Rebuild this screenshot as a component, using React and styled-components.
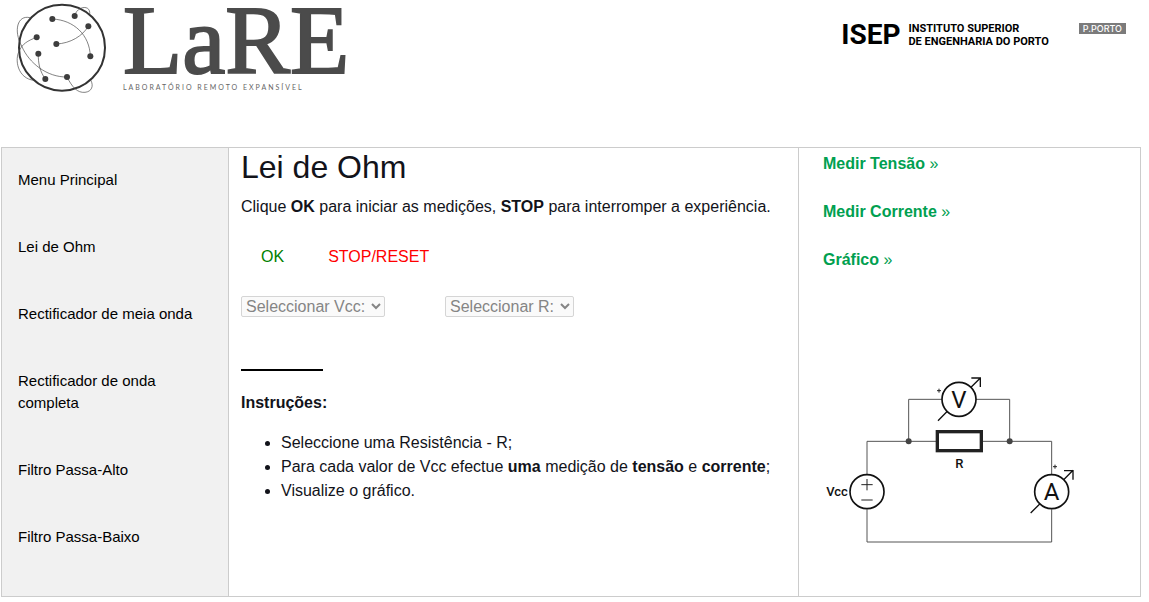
import React from "react";
import styled, { createGlobalStyle } from "styled-components";

const GlobalStyle = createGlobalStyle`
  *, *::before, *::after { box-sizing: border-box; }
  body {
    margin: 0;
    background: #fff;
    color: #12131a;
    font-family: "Liberation Sans", Arial, sans-serif;
    font-size: 16px;
    line-height: 24px;
  }
`;

const Header = styled.header`
  display: flex;
  align-items: flex-start;
  justify-content: space-between;
  min-height: 147px;
  padding: 0 23px 0 14px;
`;

const Brand = styled.a`
  display: flex;
  gap: 15px;
  color: #4b4b4b;
  text-decoration: none;
`;

const BrandText = styled.span`
  display: flex;
  flex-direction: column;
`;

const Wordmark = styled.span`
  font-family: "Liberation Serif", "Times New Roman", serif;
  font-size: 97px;
  line-height: 82px;
  -webkit-text-stroke: 2px currentColor;
`;

const Tagline = styled.small`
  font-family: Lato, sans-serif;
  font-size: 7px;
  font-weight: 400;
  line-height: 10px;
  letter-spacing: 2px;
  color: #666;
`;

const Partners = styled.div`
  display: flex;
  align-items: flex-start;
  gap: 30px;
  padding-top: 22px;
`;

const School = styled.div`
  display: flex;
  align-items: center;
  gap: 8px;
  color: #000;
  font-family: Roboto, sans-serif;
  font-weight: 700;
`;

const Acronym = styled.span`
  font-size: 28px;
  line-height: 26px;
`;

const SchoolName = styled.span`
  font-size: 11px;
  line-height: 13px;
`;

const PortoTag = styled.span`
  margin-top: 1px;
  padding: 0 4px;
  background: #7b7b7b;
  color: #fff;
  font-family: Inter, sans-serif;
  font-size: 9px;
  font-weight: 500;
  line-height: 11px;
`;

const Columns = styled.div`
  display: grid;
  grid-template-columns: 20% 50% 30%;
  min-height: 450px;
  margin: 0 8px 5px 1px;
  border: solid #ccc;
  border-width: 1px 0;
`;

const Sidebar = styled.nav`
  display: flex;
  flex-direction: column;
  gap: 45px;
  padding: 21px 16px;
  border: solid #ccc;
  border-width: 0 1px;
  background: #f1f1f1;
`;

const MenuLink = styled.a`
  color: #000;
  font-size: 15px;
  line-height: 22px;
  text-decoration: none;
`;

const Main = styled.main`
  padding: 0 12px;
  border-right: 1px solid #ccc;
`;

const Title = styled.h1`
  margin: 0 0 8px;
  font-size: 32px;
  font-weight: 400;
  line-height: 39px;
`;

const Paragraph = styled.p`
  margin: 0;
`;

const Actions = styled.div`
  display: flex;
  gap: 4px;
  margin-top: 20px;
`;

const ActionButton = styled.button`
  padding: 6px 20px;
  border: 0;
  background: transparent;
  color: ${({ $color }) => $color};
  font: inherit;
  cursor: pointer;
`;

const Selectors = styled.div`
  display: flex;
  gap: 60px;
  margin-top: 21px;
`;

const Select = styled.select`
  height: 21px;
  padding-right: 2px;
  border: 1px solid #d5d5d5;
  border-radius: 2px;
  background: #fafafa;
  color: #858585;
  font: inherit;
  line-height: 18px;
  opacity: 1;
`;

const Rule = styled.hr`
  width: 82px;
  height: 2px;
  margin: 52px 0 20px;
  border: 0;
  background: #000;
`;

const Steps = styled.ul`
  margin: 16px 0;
  padding-left: 40px;
`;

const Aside = styled.aside`
  display: flex;
  flex-direction: column;
  align-items: flex-start;
  gap: 24px;
  padding: 4px 24px;
  border-right: 1px solid #ccc;
`;

const MeasureLink = styled.a`
  color: #00a050;
  text-decoration: none;
`;

const Circuit = styled.svg`
  display: block;
  margin-top: 79px;
  font-family: Roboto, sans-serif;
  font-weight: 500;
`;

const MENU = [
  "Menu Principal",
  "Lei de Ohm",
  "Rectificador de meia onda",
  "Rectificador de onda completa",
  "Filtro Passa-Alto",
  "Filtro Passa-Baixo",
];

const MEASURES = ["Medir Tensão", "Medir Corrente", "Gráfico"];

const NODES = [
  [115, 57], [182, 48], [223, 79], [68, 112], [127, 132],
  [73, 161], [229, 169], [159, 231], [94, 237],
];

function Globe() {
  return (
    <svg width="94" height="96" viewBox="0 0 282 288" fill="none" aria-hidden="true">
      <circle cx="144" cy="143" r="129" stroke="#333" strokeWidth="6" />
      <g stroke="#444" strokeWidth="2">
        <path d="M115 57C180 60 227 105 229 169" />
        <path d="M223 79C205 108 170 130 127 132" />
        <path d="M182 48C188 18 231 12 227 43" />
        <path d="M68 112C40 122 25 133 17 150C0 178 11 236 60 241" />
        <path d="M48 53C10 44 -2 92 23 138C45 190 100 232 159 231" />
        <path d="M73 161C72 190 78 215 94 237" />
        <path d="M159 231C175 262 190 279 213 277C233 275 240 258 230 240" />
      </g>
      <g fill="#3d3d3d">
        {NODES.map(([x, y]) => <circle key={`${x}-${y}`} cx={x} cy={y} r="9" />)}
      </g>
    </svg>
  );
}

function CircuitDiagram() {
  return (
    <Circuit width="252" height="174" viewBox="0 0 756 522" fill="none" role="img" aria-label="Circuito da Lei de Ohm">
      <g stroke="#555" strokeWidth="3">
        <path d="M132 297V199H340M478 199H686V297M132 403V501H686V403" />
        <path d="M257 199V73H357M459 73H560V199" />
      </g>
      <g fill="#444">
        <circle cx="257" cy="199" r="9" />
        <circle cx="560" cy="199" r="9" />
      </g>
      <rect x="343" y="170" width="132" height="57" stroke="#222" strokeWidth="10" />
      <g stroke="#111" strokeWidth="5">
        <circle cx="408" cy="73" r="51" />
        <circle cx="132" cy="350" r="51" />
        <circle cx="686" cy="350" r="51" />
      </g>
      <g stroke="#111" strokeWidth="4">
        <path d="M444 37L472 9M445 9H472V36M373 109L345 137" />
        <path d="M722 314L750 286M723 287H750V314M651 386L623 414" />
      </g>
      <g stroke="#222" strokeWidth="3">
        <path d="M115 329H149M132 312V346M115 375H149" />
        <path d="M342 47H354M348 41V53M690 275H702M696 269V281" />
      </g>
      <g fill="#111" textAnchor="middle">
        <text x="408" y="99" fontSize="72" fontWeight="400">V</text>
        <text x="686" y="376" fontSize="72" fontWeight="400">A</text>
        <text x="409" y="278" fontSize="39">R</text>
        <text x="42" y="363" fontSize="39">Vcc</text>
      </g>
    </Circuit>
  );
}

export default function App() {
  return (
    <>
      <GlobalStyle />
      <Header>
        <Brand href="#inicio">
          <Globe />
          <BrandText>
            <Wordmark>LaRE</Wordmark>
            <Tagline>LABORATÓRIO REMOTO EXPANSÍVEL</Tagline>
          </BrandText>
        </Brand>
        <Partners>
          <School>
            <Acronym>ISEP</Acronym>
            <SchoolName>INSTITUTO SUPERIOR<br />DE ENGENHARIA DO PORTO</SchoolName>
          </School>
          <PortoTag>P.PORTO</PortoTag>
        </Partners>
      </Header>
      <Columns>
        <Sidebar>
          {MENU.map((item) => <MenuLink key={item} href="#menu">{item}</MenuLink>)}
        </Sidebar>
        <Main>
          <Title>Lei de Ohm</Title>
          <Paragraph>
            Clique <b>OK</b> para iniciar as medições, <b>STOP</b> para interromper a experiência.
          </Paragraph>
          <Actions>
            <ActionButton type="button" $color="green">OK</ActionButton>
            <ActionButton type="button" $color="red">STOP/RESET</ActionButton>
          </Actions>
          <Selectors>
            <Select disabled aria-label="Seleccionar Vcc"><option>Seleccionar Vcc:</option></Select>
            <Select disabled aria-label="Seleccionar R"><option>Seleccionar R:</option></Select>
          </Selectors>
          <Rule />
          <Paragraph><b>Instruções:</b></Paragraph>
          <Steps>
            <li>Seleccione uma Resistência - R;</li>
            <li>Para cada valor de Vcc efectue <b>uma</b> medição de <b>tensão</b> e <b>corrente</b>;</li>
            <li>Visualize o gráfico.</li>
          </Steps>
        </Main>
        <Aside>
          {MEASURES.map((item) => (
            <MeasureLink key={item} href="#medir"><b>{item}</b> »</MeasureLink>
          ))}
          <CircuitDiagram />
        </Aside>
      </Columns>
    </>
  );
}
